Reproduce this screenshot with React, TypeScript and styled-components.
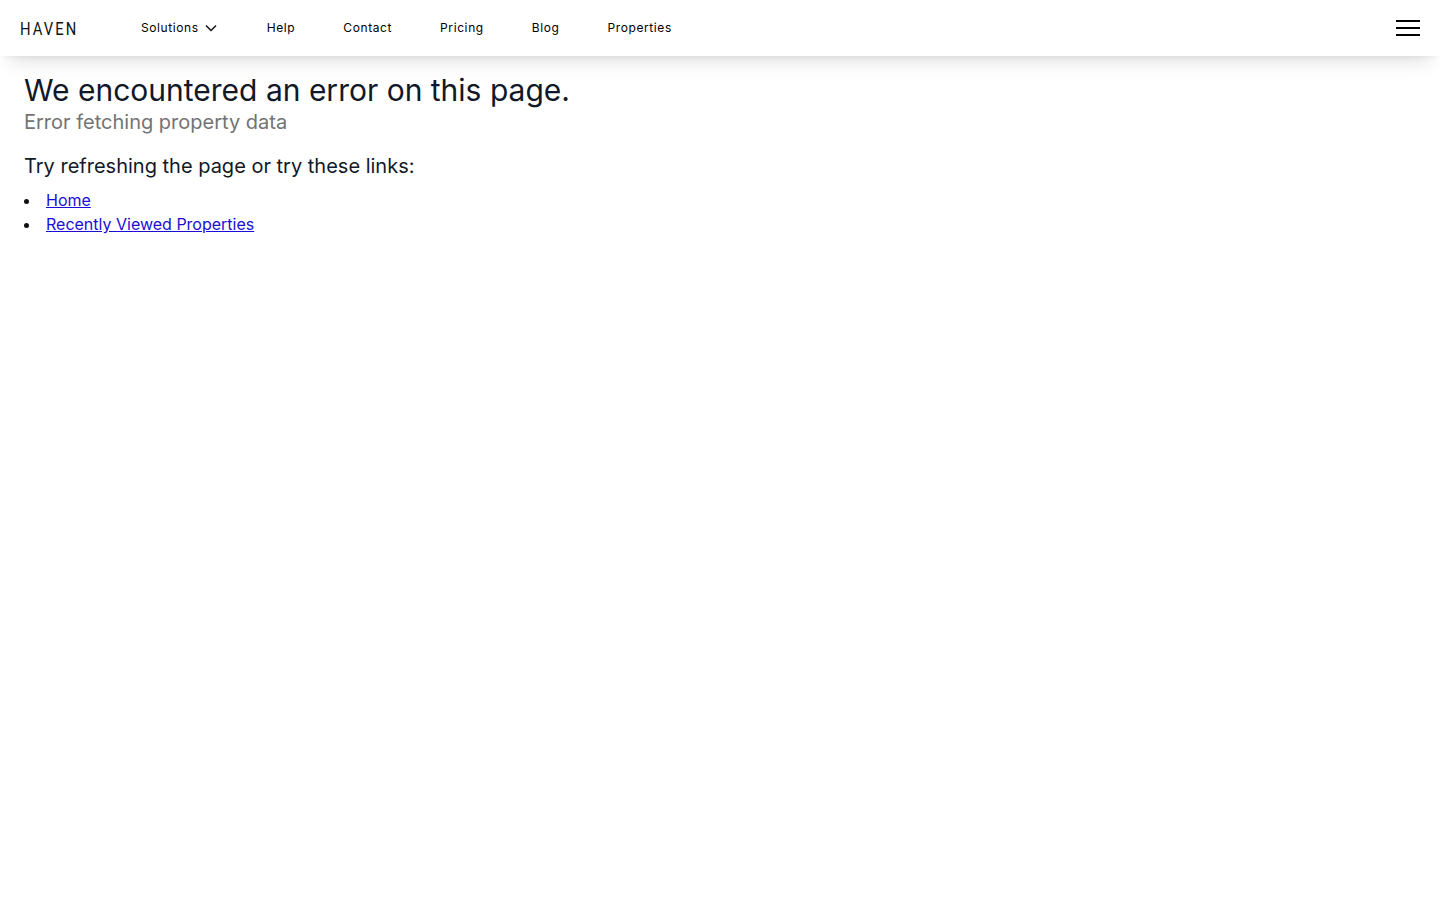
import React from 'react';
import styled, {createGlobalStyle} from "styled-components";

const GlobalStyle = createGlobalStyle`
  * {
    box-sizing: border-box;
  }

  body {
    margin: 0;
    background: #fff;
    color: #111827;
    font-family: Inter, sans-serif;
  }
`

const links = ["Help", "Contact", "Pricing", "Blog", "Properties"];

export default function App() {
    return (
        <>
            <GlobalStyle/>
            <Header>
                <LogoBox>
                    <Logo>HAVEN</Logo>
                </LogoBox>
                <Nav>
                    <NavItem href="#">
                        Solutions
                        <Chevron width="12" height="8" viewBox="0 0 12 8" fill="none">
                            <path d="M1 1.5L6 6.5L11 1.5" stroke="#111" strokeWidth="1.5"/>
                        </Chevron>
                    </NavItem>
                    {links.map(link => <NavItem href="#" key={link}>{link}</NavItem>)}
                </Nav>
                <Burger aria-label="Menu">
                    <span/>
                    <span/>
                    <span/>
                </Burger>
            </Header>
            <Main>
                <Title>We encountered an error on this page.</Title>
                <Subtitle>Error fetching property data</Subtitle>
                <Hint>Try refreshing the page or try these links:</Hint>
                <LinkList>
                    <li><a href="#">Home</a></li>
                    <li><a href="#">Recently Viewed Properties</a></li>
                </LinkList>
            </Main>
        </>
    );
}

const Header = styled.header`
  display: flex;
  align-items: center;
  height: 56px;
  padding: 0 20px;
  background: #fff;
  box-shadow: 0 14px 20px -10px rgba(0, 0, 0, 0.14), 0 4px 6px -4px rgba(0, 0, 0, 0.08);
`

const LogoBox = styled.div`
  width: 57px;
  margin-top: 1px;
`

const Logo = styled.div`
  font-family: Roboto, sans-serif;
  font-size: 18px;
  font-weight: 400;
  letter-spacing: 2.5px;
  white-space: nowrap;
  color: #111;
  transform: scaleX(0.82);
  transform-origin: left center;
`

const Nav = styled.nav`
  display: flex;
  align-items: center;
  gap: 48px;
  margin-left: 64px;
`

const NavItem = styled.a`
  display: flex;
  align-items: center;
  gap: 6px;
  font-size: 12px;
  font-weight: 400;
  line-height: 16px;
  letter-spacing: 0.6px;
  color: #000;
  text-decoration: none;
`

const Chevron = styled.svg`
  margin-right: 2px;
`

const Burger = styled.button`
  display: flex;
  flex-direction: column;
  gap: 5px;
  width: 24px;
  margin-left: auto;
  padding: 0;
  border: 0;
  background: none;

  span {
    display: block;
    height: 2px;
    background: #000;
  }
`

const Main = styled.main`
  padding: 16px 24px;
`

const Title = styled.h1`
  margin: 0;
  font-size: 30px;
  font-weight: 400;
  line-height: 36px;
  color: #111827;
`

const Subtitle = styled.p`
  margin: 0;
  font-size: 20px;
  line-height: 28px;
  color: #737373;
`

const Hint = styled.p`
  margin: 16px 0 0;
  font-size: 20px;
  line-height: 28px;
  color: #111827;
`

const LinkList = styled.ul`
  display: flex;
  flex-direction: column;
  margin: 8px 0 0;
  padding: 0;
  list-style: none;
  font-size: 16px;
  line-height: 24px;

  li {
    display: flex;
    align-items: center;
    gap: 17px;
  }

  li::before {
    content: "";
    width: 5px;
    height: 5px;
    margin-top: 2px;
    border-radius: 50%;
    background: #111;
  }

  a {
    color: #1a0dd6;
    text-decoration: underline;
  }
`
